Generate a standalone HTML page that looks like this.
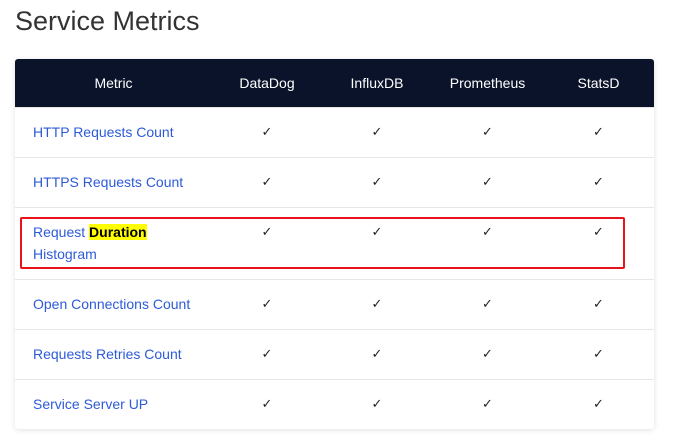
<!DOCTYPE html>
<html><head><meta charset="utf-8"><style>
body{margin:0;background:#fff;font-family:"Liberation Sans",sans-serif;width:673px;height:444px;overflow:hidden;position:relative}
h1{position:absolute;left:15px;top:6px;margin:0;font-weight:300;font-size:27px;color:#333;letter-spacing:0}
.tbl{position:absolute;left:15px;top:59px;width:639px;border-radius:3px;box-shadow:0 1px 6px rgba(0,0,0,.12);background:#fff;overflow:hidden}
table{border-collapse:collapse;width:639px;font-size:14px}
th{background:#0b132b;color:#fff;font-weight:400;height:48px;padding:0;text-align:center}
td{border-top:1px solid #e6e6e6;padding:13px 0 14px;line-height:22px;vertical-align:top;text-align:center;color:#222;font-size:13px}
td.m{text-align:left;padding-left:18px;color:#2d5bd8;font-size:14px}
tr:first-child td{border-top:0}
.hl{background:#ff0;color:#000;font-weight:700}
.red{position:absolute;left:20px;top:217px;width:601px;height:48px;border:2px solid #e8131b;border-radius:2px}
</style></head><body>
<h1>Service Metrics</h1>
<div class="tbl"><table>
<colgroup><col style="width:197px"><col style="width:110px"><col style="width:110px"><col style="width:111px"><col style="width:111px"></colgroup>
<tr><th>Metric</th><th>DataDog</th><th>InfluxDB</th><th>Prometheus</th><th>StatsD</th></tr>
<tr><td class="m">HTTP Requests Count</td><td>✓</td><td>✓</td><td>✓</td><td>✓</td></tr>
<tr><td class="m">HTTPS Requests Count</td><td>✓</td><td>✓</td><td>✓</td><td>✓</td></tr>
<tr><td class="m">Request <span class="hl">Duration</span><br>Histogram</td><td>✓</td><td>✓</td><td>✓</td><td>✓</td></tr>
<tr><td class="m">Open Connections Count</td><td>✓</td><td>✓</td><td>✓</td><td>✓</td></tr>
<tr><td class="m">Requests Retries Count</td><td>✓</td><td>✓</td><td>✓</td><td>✓</td></tr>
<tr><td class="m">Service Server UP</td><td>✓</td><td>✓</td><td>✓</td><td>✓</td></tr>
</table></div>
<div class="red"></div>
</body></html>
